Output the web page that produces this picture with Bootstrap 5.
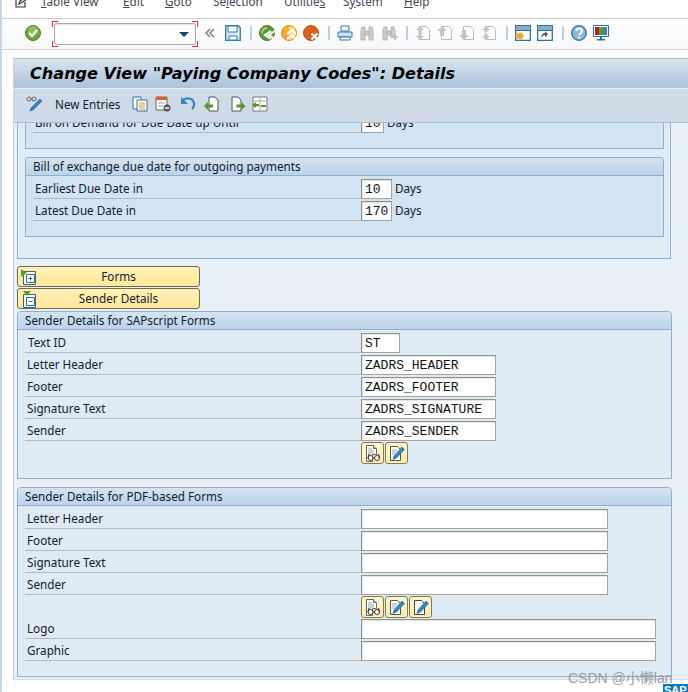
<!DOCTYPE html>
<html lang="en"><head><meta charset="utf-8"><title>Paying Company Codes</title>
<link href="https://cdn.jsdelivr.net/npm/bootstrap@5.3.0/dist/css/bootstrap.min.css" rel="stylesheet">
<style>
html,body{height:692px;overflow:hidden}
body{background:#fff;font-family:"Noto Sans",Tahoma,sans-serif;font-size:11.7px;color:#10202c;line-height:16px;position:relative;width:688px;border-left:2px solid #c6d6e6}
.menubar{height:19px;border-bottom:1px solid #c8ccd0;overflow:hidden;padding-left:13px;color:#445}
.menubar span.mi{position:absolute;top:-7px;white-space:nowrap}
.toolbar{height:31px;border-bottom:1px solid #cfd3d6;background:linear-gradient(#fff,#f6f7f8);padding:0 0 2px 23px}
.tic{width:16px;height:16px;margin-right:6px;flex:none}
.tsep{width:2px;height:14px;background:#b9cfe2;margin:0 7px 0 1px;flex:none}
.combo-frame{width:146px;height:26px;margin:2px 7px 0 -6px;padding:2px;flex:none;background:
 linear-gradient(#d33,#d33) 0 0/6px 1px no-repeat,linear-gradient(#d33,#d33) 0 0/1px 6px no-repeat,
 linear-gradient(#d33,#d33) 100% 0/6px 1px no-repeat,linear-gradient(#d33,#d33) 100% 0/1px 6px no-repeat,
 linear-gradient(#d33,#d33) 0 100%/6px 1px no-repeat,linear-gradient(#d33,#d33) 0 100%/1px 6px no-repeat,
 linear-gradient(#d33,#d33) 100% 100%/6px 1px no-repeat,linear-gradient(#d33,#d33) 100% 100%/1px 6px no-repeat}
.combo-box{height:22px;border:1px solid #a9adb0;border-radius:2px;background:#fff;padding-right:6px;box-shadow:inset 0 1px 2px #ddd}
.chev{width:10px;margin-right:10px;flex:none;height:16px}
.sapwin{margin:8px 0 0 11px;width:700px;height:622px;background:#e8f0f7;border-left:1px solid #c6d6e6;border-bottom:1px solid #d3dee8;border-top:1px solid #a9bfd3;overflow:hidden}
.sap-title{height:30px;background:linear-gradient(#d8e4ef,#abc2d9);font:italic bold 16.1px "DejaVu Sans",sans-serif;color:#000;padding-left:16px;border-bottom:1px solid #e8f0f7;white-space:nowrap}
.sap-apptb{height:34px;background:#cedbe6;border-bottom:1px solid #a9bdcf;padding:0 0 3px 12px}
.apptxt{margin:0 12px 0 2px;color:#123}
.app-ic{margin-right:7px}
.scrollarea{height:557px;padding-left:3px}
.outerbox{width:654px;height:136px;background:#e0ecf5;border:solid #8fb0cf;border-width:0 1px 1px 1px;padding:0 7px}
.grp{width:639px;background:#d2e3f1;border:1px solid #92aecb}
.grp-clip{border-top:0;height:26px}
.grp-full{margin-top:8px;height:80px;border-radius:3px 3px 0 0;overflow:hidden}
.sec{width:655px;background:#deeaf4;border:1px solid #92aecb;border-radius:4px 4px 0 0;overflow:hidden}
.sec-a{height:168px;margin-top:2px}
.sec-b{height:190px;margin-top:8px}
.sec-head{height:18px;background:linear-gradient(#d5e4f1,#bcd3e8);border-bottom:1px solid #92aecb;padding-left:7px;line-height:16px;color:#10202c}
.frm{padding:1px 0 0 7px}
.frow{height:22px}
.frow.clip{height:10px;overflow:hidden}
.flab{width:328px;height:22px;flex:none;border-bottom:1px solid #b8b8b8;padding:3px 0 0 2px;color:#10202c}
.sec .flab{width:336px}
.sec .flab-in{padding-left:3px}
.fin{height:20px;flex:none;background:#fff;border:1px solid #a2a2a2;border-top-color:#8f8f8f;border-left-color:#8f8f8f;font:13px/19px "Liberation Mono",monospace;color:#111;padding-left:3px;white-space:nowrap;overflow:hidden;box-shadow:inset 1px 1px 0 #e6e6e6}
.w31{width:31px}.w23{width:23px}.w39{width:39px}.w135{width:135px}.w247{width:247px}.w295{width:295px}
.unit{margin-left:3px;padding-top:3px}
.exp{display:block;width:183px;height:21px;background:linear-gradient(#fff1b8,#fde899);border:1px solid #6f6a50;border-radius:3px;margin-bottom:1px;color:#10202c;position:relative;padding:0 0 1px 20px;font-size:11.7px;line-height:16px}
.exp svg{position:absolute;left:3px;top:2px}
.exp-first{margin-top:7px}
.ibtn{width:23px;height:22px;padding:0;background:linear-gradient(#fff7d6,#fde9a2);border:1px solid #85794c;border-radius:3px;margin-right:1px;box-shadow:inset 0 0 0 1px #fff5c4}
.ibrow{height:24px;padding:1px 0 0 336px}
.ibrow-b{height:22px}
.wmark{position:absolute;left:566px;top:667px;font:14px "Liberation Sans","Noto Sans CJK SC",sans-serif;color:#8a8a8a;opacity:.8;white-space:nowrap}
.saplogo{position:absolute;left:661px;top:684px;width:30px;height:14px;background:#0a7ac4;color:#fff;font:bold 11px "Liberation Sans",sans-serif;padding:0 0 0 1px;overflow:hidden}
</style></head>
<body>
<svg width="0" height="0" class="d-none" aria-hidden="true">
<symbol id="pg" viewBox="0 0 16 16"><path d="M4.500 1.500h7l3 3v10h-10z" fill="#fff" stroke="#bbb"/></symbol>
<symbol id="docread" viewBox="0 0 17 17"><path d="M2.500.5h7l3 3v6h-4v7h-6z" fill="#fff" stroke="#666"/><path d="M9.500.5v3h3" fill="#ddd" stroke="#666"/><path d="M4 4h4M4 6h6M4 8h6M4 10h3" stroke="#a5a5a5"/><circle cx="6.500" cy="13" r="2.500" fill="#fff" stroke="#333"/><circle cx="13" cy="13" r="2.500" fill="#fff" stroke="#333"/><path d="M9 13h1.500M4 13L5 9M15.500 13L14.500 9" stroke="#333"/></symbol>
<symbol id="docedit" viewBox="0 0 17 17"><path d="M2.500 1.500h7l3 3v11h-10z" fill="#fff" stroke="#555"/><path d="M4 5h5M4 7h4M4 9h3" stroke="#a5a5a5"/><path d="M14 2l2.500 2.500-8 8.500-3.500 1.500 1-3.500z" fill="#2f86c0" stroke="#1f5f90" stroke-width=".6"/></symbol>
<symbol id="docblank" viewBox="0 0 17 17"><path d="M2.500 1.500h7l3 3v11h-10z" fill="#fff" stroke="#444"/><path d="M14 2l2.500 2.500-8 8.500-3.500 1.500 1-3.500z" fill="#2f86c0" stroke="#1f5f90" stroke-width=".6"/></symbol>
</svg>

<div class="menubar position-relative">
 <svg class="position-absolute" style="left:13px;top:-3px" width="13" height="11" viewBox="0 0 13 11"><path d="M1 2v8h9V5M4 7l1-3 6-4 1 2-6 4z" fill="none" stroke="#334" stroke-width="1.200"/></svg>
 <span class="mi" style="left:39px"><u>T</u>able View</span>
 <span class="mi" style="left:121px"><u>E</u>dit</span>
 <span class="mi" style="left:163px"><u>G</u>oto</span>
 <span class="mi" style="left:211px">Se<u>l</u>ection</span>
 <span class="mi" style="left:282px">Utilitie<u>s</u></span>
 <span class="mi" style="left:341px">S<u>y</u>stem</span>
 <span class="mi" style="left:402px"><u>H</u>elp</span>
</div>

<div class="toolbar d-flex align-items-center">
 <svg class="tic" style="margin-right:17px" viewBox="0 0 16 16"><circle cx="8" cy="8" r="7.500" fill="#6fa63a" stroke="#4f7f2a"/><circle cx="8" cy="6" r="5" fill="#9ccb6b" opacity=".6"/><path d="M4 8l3 3 5-6" fill="none" stroke="#fff" stroke-width="2.200"/></svg>
 <div class="combo-frame"><div class="combo-box d-flex align-items-center justify-content-end"><svg width="10" height="5" viewBox="0 0 10 5"><path d="M0 0h10L5 5z" fill="#1f3f78"/></svg></div></div>
 <svg class="chev" viewBox="0 0 10 16"><path d="M5 4L1 8l4 4M9 4L5 8l4 4" fill="none" stroke="#777" stroke-width="1.400"/></svg>
 <svg class="tic" style="margin-right:8px" viewBox="0 0 16 16"><path d="M.7.700h12.600l2 2v12.600H.7z" fill="#d8e7f3" stroke="#2f7cab" stroke-width="1.300"/><path d="M3 1h9v6H3z" fill="#fff" stroke="#2f7cab"/><path d="M4 11h8v4H4z" fill="#fff" stroke="#2f7cab"/></svg>
 <span class="tsep"></span>
 <svg class="tic" viewBox="0 0 16 16"><circle cx="8" cy="8" r="7.500" fill="#5d9a38" stroke="#467a2a"/><path d="M8 3a5 5 0 0 0-5 5" fill="none" stroke="#a7d17d" stroke-width="2"/><path d="M16 6l-6 4 6 4M12 6l-6 4 6 4" fill="none" stroke="#fff" stroke-width="2"/></svg>
 <svg class="tic" viewBox="0 0 16 16"><circle cx="8" cy="8" r="7.500" fill="#f3ad2e" stroke="#d98c16"/><path d="M8 1a7 7 0 0 1 0 14z" fill="#fbd985"/><path d="M6 9l5-4 4 4M6 14l5-4 4 4" fill="none" stroke="#fff" stroke-width="2"/></svg>
 <svg class="tic" style="margin-right:8px" viewBox="0 0 16 16"><circle cx="8" cy="8" r="7.500" fill="#d95f1f" stroke="#b84c14"/><path d="M8.500 8.500l6 6M14.500 8.500l-6 6" stroke="#fff" stroke-width="2.400"/></svg>
 <span class="tsep"></span>
 <svg class="tic" style="margin-right:7px" viewBox="0 0 16 16"><path d="M4 1h8v5H4z" fill="#fff" stroke="#2f7cab"/><path d="M1 7h14v5H1z" fill="#cfe0ee" stroke="#2f7cab"/><path d="M3 12h10v3H3z" fill="#fff" stroke="#2f7cab"/></svg>
 <svg class="tic" style="margin-right:8px;width:14px" viewBox="0 0 14 16"><path d="M1 15V6l1-4h3v13zM9 15V2h3l1 4v9zM5 6h4v4H5z" fill="#ccc" stroke="#b5b5b5"/></svg>
 <svg class="tic" style="margin-right:7px" viewBox="0 0 16 16"><path d="M1 15V6l1-4h3v13zM9 13V2h3l1 4v3zM5 6h4v4H5z" fill="#ccc" stroke="#b5b5b5"/><path d="M13 9v6M10 12h6" stroke="#c4c4c4" stroke-width="2"/></svg>
 <span class="tsep"></span>
 <svg class="tic" viewBox="0 0 16 16"><use href="#pg"/><path d="M5 1L1 5h2.500v3h3V5H9zM5 15l4-4H6.500V8h-3v3H1z" fill="#c4c4c4"/></svg>
 <svg class="tic" viewBox="0 0 16 16"><use href="#pg"/><path d="M5 1L0 6h3v5h4V6h3z" fill="#c4c4c4"/></svg>
 <svg class="tic" viewBox="0 0 16 16"><use href="#pg"/><path d="M5 15L0 10h3V5h4v5h3z" fill="#c4c4c4"/></svg>
 <svg class="tic" style="margin-right:8px" viewBox="0 0 16 16"><use href="#pg"/><path d="M5 1L1 5h2.500v2h3V5H9zM5 15l4-4H6.500V9h-3v2H1z" fill="#c4c4c4"/></svg>
 <span class="tsep"></span>
 <svg class="tic" viewBox="0 0 16 16"><path d="M.7.700h14.600v14.600H.7z" fill="#fff" stroke="#2f6f9f" stroke-width="1.300"/><path d="M1 1h14v4H1z" fill="#86aecb"/><path d="M1 5.500h14" stroke="#2f6f9f"/><circle cx="5" cy="11" r="3" fill="#f5a623"/><path d="M5 6.500v9M.5 11h9M2 8l6 6M8 8l-6 6" stroke="#f5a623"/></svg>
 <svg class="tic" style="margin-right:8px" viewBox="0 0 16 16"><path d="M.7.700h14.600v14.600H.7z" fill="#fff" stroke="#2f6f9f" stroke-width="1.300"/><path d="M1 1h14v4H1z" fill="#86aecb"/><path d="M1 5.500h14" stroke="#2f6f9f"/><path d="M4 13c0-3 2-5 4-5V6l3 3.500L8 12v-2c-1 0-3 1-4 3z" fill="#555"/></svg>
 <span class="tsep"></span>
 <svg class="tic" viewBox="0 0 16 16"><circle cx="8" cy="8" r="7.300" fill="#8fb6d6" stroke="#2f6f9f" stroke-width="1.300"/><path d="M5.300 6.200C5.300 2.800 11 2.800 11 6c0 2.200-2.800 2.200-2.800 4.300" fill="none" stroke="#fff" stroke-width="2"/><path d="M7.200 11.500h2v2h-2z" fill="#fff"/></svg>
 <svg class="tic" viewBox="0 0 16 16"><path d="M.5.500h15v11H.500z" fill="#fff" stroke="#2f6f9f"/><path d="M2 2h4v8H2z" fill="#c8161d"/><path d="M6 2h4v8H6z" fill="#5aa02c"/><path d="M10 2h4v8h-4z" fill="#3b7fc4"/><path d="M7 12h2v2h3v1.500H4V14h3z" fill="#2f6f9f"/></svg>
</div>

<div class="sapwin">
 <div class="sap-title d-flex align-items-center">Change View "Paying Company Codes": Details</div>
 <div class="sap-apptb d-flex align-items-center">
  <svg class="tic" style="margin-right:11px" viewBox="0 0 16 16"><circle cx="3" cy="3" r="2" fill="none" stroke="#666"/><circle cx="8" cy="3" r="2" fill="none" stroke="#666"/><path d="M5 3h1" stroke="#666"/><path d="M14 3l2 2-9 9-3 1 1-3z" fill="#2f86c0" stroke="#1f5f90" stroke-width=".6"/></svg>
  <span class="apptxt">New Entries</span>
  <svg class="tic app-ic" viewBox="0 0 16 16"><path d="M1 1h8v12H1z" fill="#fff" stroke="#2f6f9f"/><path d="M5 4h10v11H5z" fill="#fff" stroke="#2f6f9f"/><path d="M7 7h6M7 9h6M7 11h6M7 13h6" stroke="#e0a020"/></svg>
  <svg class="tic app-ic" style="margin-right:9px" viewBox="0 0 16 16"><path d="M1 1h11v13H1z" fill="#fff" stroke="#666"/><path d="M1 1h11v3H1z" fill="#d95f2a"/><path d="M3 7h7M3 10h5" stroke="#999"/><circle cx="12" cy="12" r="3.500" fill="#555"/><path d="M10 12h4" stroke="#fff" stroke-width="1.500"/></svg>
  <svg class="tic app-ic" style="margin-right:8px" viewBox="0 0 16 16"><path d="M3 4c4-3 10-2 11 3 .5 3-1 5-2 6" fill="none" stroke="#2f86c0" stroke-width="2.200"/><path d="M1 1v7h7z" fill="#2f86c0"/></svg>
  <svg class="tic app-ic" style="margin-right:10px" viewBox="0 0 16 16"><path d="M5 1h6l3 3v11H5z" fill="#fff" stroke="#555"/><path d="M0 10l4-4v2.500h5v3H4V14z" fill="#4f9a2e"/></svg>
  <svg class="tic app-ic" style="margin-right:6px" viewBox="0 0 16 16"><path d="M2 1h6l3 3v11H2z" fill="#fff" stroke="#555"/><path d="M15.500 10l-4-4v2.500h-5v3h5V14z" fill="#4f9a2e"/></svg>
  <svg class="tic app-ic" viewBox="0 0 16 16"><path d="M1 1h14v14H1z" fill="#fff" stroke="#777"/><path d="M8 1v14M1 5h14M1 10h14" stroke="#aaa"/><path d="M0 9l4-3v2h3v2H4v2z" fill="#4f9a2e"/><path d="M9 9h5v2H9z" fill="#4f9a2e"/></svg>
 </div>
 <div class="scrollarea">
  <div class="outerbox">
   <div class="grp grp-clip">
    <div class="frm pt-0">
     <div class="frow clip d-flex align-items-end"><div class="flab text-nowrap">Bill on Demand for Due Date up Until</div><div class="fin w23">10</div><div class="unit text-nowrap" style="height:22px">Days</div></div>
    </div>
   </div>
   <div class="grp grp-full">
    <div class="sec-head">Bill of exchange due date for outgoing payments</div>
    <div class="frm">
     <div class="frow d-flex align-items-end"><div class="flab">Earliest Due Date in</div><div class="fin w31">10</div><div class="unit align-self-start">Days</div></div>
     <div class="frow d-flex align-items-end"><div class="flab">Latest Due Date in</div><div class="fin w31">170</div><div class="unit align-self-start">Days</div></div>
    </div>
   </div>
  </div>

  <button type="button" class="btn exp exp-first"><svg width="16" height="18" viewBox="0 0 16 18"><path d="M2.500 2.500h12v13h-12z" fill="#fff" stroke="#44606f"/><path d="M5.500 5.500h8v8h-8z" fill="#fff" stroke="#2f6f9f"/><path d="M7.500 9.500h4M9.500 7.500v4" stroke="#2f6f9f"/><path d="M0 0l6 4-6 4z" fill="#5aa02c"/></svg>Forms</button>
  <button type="button" class="btn exp"><svg width="16" height="18" viewBox="0 0 16 18"><path d="M2.500 3.500h12v13h-12z" fill="#fff" stroke="#44606f"/><path d="M5.500 6.500h8v8h-8z" fill="#fff" stroke="#2f6f9f"/><path d="M7.500 10.500h4" stroke="#2f6f9f"/><path d="M2 0h8L6 5z" fill="#5aa02c"/></svg>Sender Details</button>

  <div class="sec sec-a">
   <div class="sec-head">Sender Details for SAPscript Forms</div>
   <div class="frm">
    <div class="frow d-flex align-items-end"><div class="flab flab-in">Text ID</div><div class="fin w39">ST</div></div>
    <div class="frow d-flex align-items-end"><div class="flab">Letter Header</div><div class="fin w135">ZADRS_HEADER</div></div>
    <div class="frow d-flex align-items-end"><div class="flab">Footer</div><div class="fin w135">ZADRS_FOOTER</div></div>
    <div class="frow d-flex align-items-end"><div class="flab">Signature Text</div><div class="fin w135">ZADRS_SIGNATURE</div></div>
    <div class="frow d-flex align-items-end"><div class="flab">Sender</div><div class="fin w135">ZADRS_SENDER</div></div>
    <div class="ibrow d-flex align-items-start">
     <button type="button" class="btn ibtn d-flex align-items-center justify-content-center"><svg width="17" height="17"><use href="#docread"/></svg></button>
     <button type="button" class="btn ibtn d-flex align-items-center justify-content-center"><svg width="17" height="17"><use href="#docedit"/></svg></button>
    </div>
   </div>
  </div>

  <div class="sec sec-b">
   <div class="sec-head">Sender Details for PDF-based Forms</div>
   <div class="frm">
    <div class="frow d-flex align-items-end"><div class="flab">Letter Header</div><div class="fin w247"></div></div>
    <div class="frow d-flex align-items-end"><div class="flab">Footer</div><div class="fin w247"></div></div>
    <div class="frow d-flex align-items-end"><div class="flab">Signature Text</div><div class="fin w247"></div></div>
    <div class="frow d-flex align-items-end"><div class="flab">Sender</div><div class="fin w247"></div></div>
    <div class="ibrow ibrow-b d-flex align-items-start">
     <button type="button" class="btn ibtn d-flex align-items-center justify-content-center"><svg width="17" height="17"><use href="#docread"/></svg></button>
     <button type="button" class="btn ibtn d-flex align-items-center justify-content-center"><svg width="17" height="17"><use href="#docedit"/></svg></button>
     <button type="button" class="btn ibtn d-flex align-items-center justify-content-center"><svg width="17" height="17"><use href="#docblank"/></svg></button>
    </div>
    <div class="frow d-flex align-items-end"><div class="flab">Logo</div><div class="fin w295"></div></div>
    <div class="frow d-flex align-items-end"><div class="flab">Graphic</div><div class="fin w295"></div></div>
   </div>
  </div>
 </div>
</div>
<div class="wmark">CSDN @小懒lan</div>
<div class="saplogo">SAP</div>
<script src="https://cdn.jsdelivr.net/npm/bootstrap@5.3.0/dist/js/bootstrap.bundle.min.js"></script>
</body></html>
